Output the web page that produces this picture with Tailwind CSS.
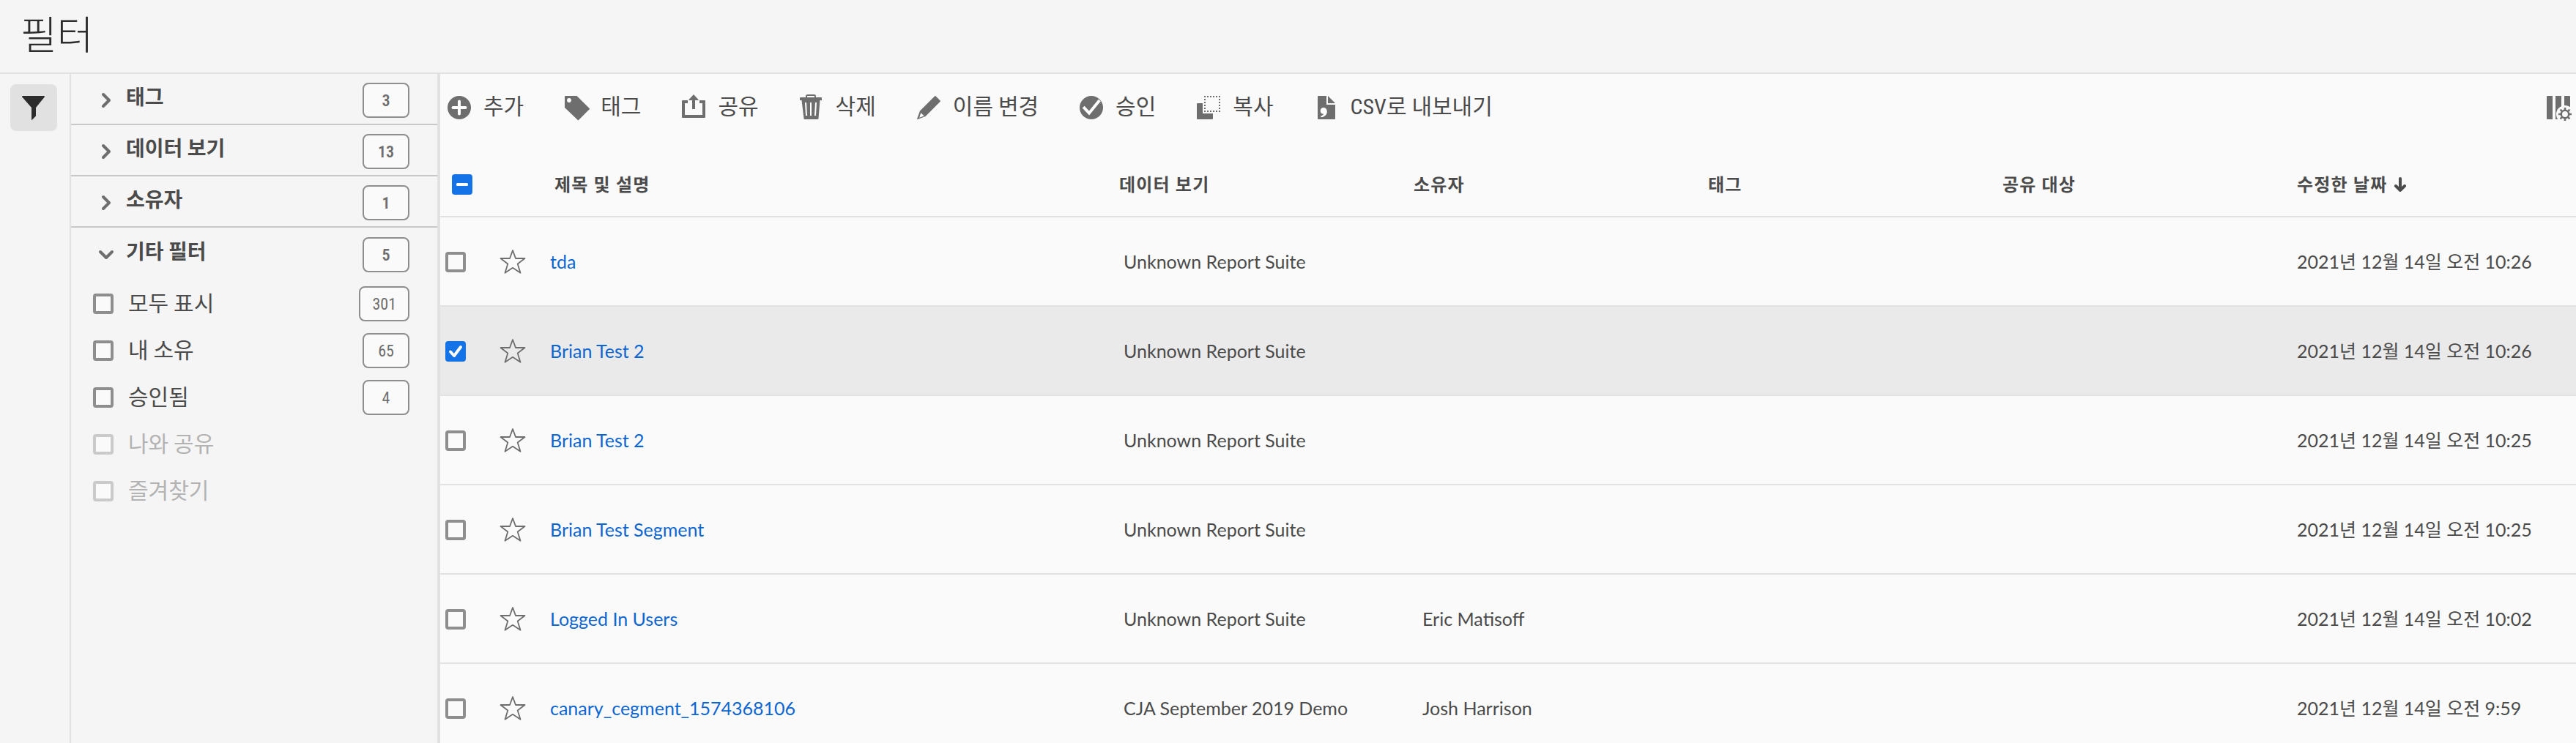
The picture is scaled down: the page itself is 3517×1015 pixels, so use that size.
<!DOCTYPE html>
<html lang="ko">
<head>
<meta charset="utf-8">
<meta name="viewport" content="width=device-width, initial-scale=1">
<title>필터</title>
<script src="https://cdn.jsdelivr.net/npm/@tailwindcss/browser@4"></script>
</head>
<body class="flex h-screen flex-col overflow-hidden bg-[#f5f5f5] font-['Roboto_Condensed','Noto_Sans_CJK_KR',sans-serif] text-[28px] text-[#4b4b4b]">

<header class="flex h-[101px] shrink-0 items-center border-b-2 border-[#e1e1e1] px-7">
  <h1 class="text-[54px] leading-none font-light text-[#2c2c2c]">필터</h1>
</header>

<div class="flex min-h-0 flex-1">
  <nav class="w-[97px] shrink-0 border-r-2 border-[#e1e1e1] pt-3.5 pl-3.5" aria-label="도구">
    <button type="button" aria-label="필터" class="flex size-16 items-center justify-center rounded-lg bg-[#e1e1e1]">
      <svg class="size-9" viewBox="0 0 36 36" fill="#2c2c2c"><path d="M3 2h29a1 1 0 0 1 .8 1.600L21 18v11.500L15.800 34.800a.5.5 0 0 1-.8-.4V18L2.200 3.600A1 1 0 0 1 3 2z"/></svg>
    </button>
  </nav>

  <aside id="filters" class="w-[504px] shrink-0 border-r-4 border-[#e1e1e1]" aria-label="필터 목록"></aside>

  <main class="min-w-0 flex-1 overflow-hidden bg-[#fafafa]">
    <div role="toolbar" class="mb-4 flex h-[92px] items-center gap-[54px] pr-1.5 pl-2 text-[30px] whitespace-nowrap text-[#4b4b4b]">
      <button type="button" class="flex items-center gap-[15px]">
        <svg class="size-9" viewBox="0 0 36 36"><circle cx="18" cy="18" r="16" fill="#6e6e6e"/><path d="M18 9.500v17M9.500 18h17" stroke="#fff" stroke-width="4" stroke-linecap="round"/></svg><span class="pb-1">추가</span>
      </button>
      <button type="button" class="flex items-center gap-[15px]">
        <svg class="size-9" viewBox="0 0 36 36"><path d="M3 2h15.500L35.700 19a1 1 0 0 1 0 1.200L21 35a1 1 0 0 1-1.200 0L2 18V3a1 1 0 0 1 1-1z" fill="#6e6e6e"/><circle cx="8" cy="8" r="2.900" fill="#fff"/></svg><span class="pb-1">태그</span>
      </button>
      <button type="button" class="flex items-center gap-[15px]">
        <svg class="size-9" viewBox="0 0 36 36" fill="#6e6e6e"><path d="M3 8h7v4H6v16h24V12h-4V8h7a1 1 0 0 1 1 1v22a1 1 0 0 1-1 1H3a1 1 0 0 1-1-1V9a1 1 0 0 1 1-1z"/><path d="M18 0l6.600 7.200a.5.5 0 0 1-.4.8H20v12h-4V8h-4.200a.5.5 0 0 1-.4-.8z"/></svg><span class="pb-1">공유</span>
      </button>
      <button type="button" class="flex items-center gap-[15px]">
        <svg class="size-9" viewBox="0 0 36 36"><path d="M11 5V2.500a1.500 1.500 0 0 1 1.500-1.500h9a1.500 1.500 0 0 1 1.500 1.500V5" fill="none" stroke="#6e6e6e" stroke-width="2"/><path d="M2 5a1 1 0 0 1 1-1h28a1 1 0 0 1 1 1v3h-2.500l-2 25a1 1 0 0 1-1 1h-18a1 1 0 0 1-1-1L4.500 8H2z" fill="#6e6e6e"/><path d="M10 11l1 18M17 11v18M24 11l-1 18" stroke="#fff" stroke-width="2"/></svg><span class="pb-1">삭제</span>
      </button>
      <button type="button" class="flex items-center gap-[15px]">
        <svg class="size-9" viewBox="0 0 36 36"><path d="M27.500 2.300l6.200 6.200a1 1 0 0 1 0 1.200L13.500 30 2.800 33.900a.6.6 0 0 1-.7-.7L6 22.500 26.300 2.300a.9.9 0 0 1 1.200 0z" fill="#6e6e6e"/><path d="M7.300 25.200l4.400 4.100-6.500 2.400z" fill="#fff"/></svg><span class="pb-1">이름 변경</span>
      </button>
      <button type="button" class="flex items-center gap-[15px]">
        <svg class="size-9" viewBox="0 0 36 36"><circle cx="18" cy="18" r="16" fill="#6e6e6e"/><path d="M8.500 18.500l6.500 7L28 9.500" fill="none" stroke="#fff" stroke-width="4" stroke-linecap="square"/></svg><span class="pb-1">승인</span>
      </button>
      <button type="button" class="flex items-center gap-[15px]">
        <svg class="size-9" viewBox="0 0 36 36"><path d="M3 12h7v14h14v7a1 1 0 0 1-1 1H3a1 1 0 0 1-1-1V13a1 1 0 0 1 1-1z" fill="#6e6e6e"/><path d="M12 3h22M12 23h22M13 2v22M33 2v22" stroke="#6e6e6e" stroke-width="2" stroke-dasharray="2 2"/></svg><span class="pb-1">복사</span>
      </button>
      <button type="button" class="flex items-center gap-[15px]">
        <svg class="size-9" viewBox="0 0 36 36"><path d="M7 2h11v12h12v19a1 1 0 0 1-1 1H7a1 1 0 0 1-1-1V3a1 1 0 0 1 1-1z" fill="#6e6e6e"/><path d="M20 2l10 10H20z" fill="#6e6e6e"/><path d="M14 18c3 0 4.800 2.300 4.800 5.400 0 4-3 7.200-8.300 7.800l-.4-1.700c2.300-.5 3.800-1.600 4.100-2.900-2.600.4-4.500-1.500-4.500-4.300 0-2.500 1.700-4.300 4.300-4.300z" fill="#fff"/></svg><span class="pb-1">CSV로 내보내기</span>
      </button>
      <button type="button" aria-label="열 설정" class="ml-auto">
        <svg class="size-9" viewBox="0 0 36 36"><path d="M2 3a1 1 0 0 1 1-1h7v32H3a1 1 0 0 1-1-1zM14 2h8v32h-8zM26 2h7a1 1 0 0 1 1 1v14h-8z" fill="#6e6e6e"/><circle cx="27" cy="27" r="12" fill="#fafafa"/><circle cx="27" cy="27" r="5.200" fill="none" stroke="#6e6e6e" stroke-width="2.500"/><path d="M27 18v3M27 33v3M18 27h3M33 27h3M20.600 20.600l2.200 2.200M31.200 31.200l2.200 2.200M33.400 20.600l-2.200 2.200M22.800 31.200l-2.200 2.200" stroke="#6e6e6e" stroke-width="2.600"/></svg>
      </button>
    </div>

    <table class="w-full table-fixed border-separate border-spacing-0 text-left font-['Lato','Noto_Sans_CJK_KR',sans-serif] text-[25px] whitespace-nowrap">
      <colgroup>
        <col class="w-[150px]"><col><col class="w-[402px]"><col class="w-[402px]"><col class="w-[402px]"><col class="w-[402px]"><col class="w-[381px]">
      </colgroup>
      <thead>
        <tr class="h-[88px] text-2xl tracking-wider *:border-b-2 *:border-[#e1e1e1] *:p-0 *:font-bold">
          <th>
            <span class="ml-4 grid size-7">
              <input type="checkbox" aria-label="모두 선택" class="col-start-1 row-start-1 size-7 appearance-none rounded bg-[#1473e6]">
              <svg class="pointer-events-none col-start-1 row-start-1 size-7" viewBox="0 0 28 28"><rect x="6" y="12" width="16" height="4" rx="1.500" fill="#fff"/></svg>
            </span>
          </th>
          <th><span class="pl-1.5">제목 및 설명</span></th>
          <th>데이터 보기</th>
          <th>소유자</th>
          <th>태그</th>
          <th>공유 대상</th>
          <th aria-sort="descending">
            <span class="flex items-center gap-2">수정한 날짜
              <svg class="size-5" viewBox="0 0 20 20" fill="none" stroke="#4b4b4b" stroke-width="4" stroke-linecap="round" stroke-linejoin="round"><path d="M10 2v15M4 12l6 6 6-6"/></svg>
            </span>
          </th>
        </tr>
      </thead>
      <tbody id="rows"></tbody>
    </table>
  </main>
</div>

<script>
const sections = [['태그', 3], ['데이터 보기', 13], ['소유자', 1], ['기타 필터', 5, true]];
const options = [['모두 표시', 301], ['내 소유', 65], ['승인됨', 4], ['나와 공유', null], ['즐겨찾기', null]];
const badge = (n, weight) => `<span class="ml-auto flex h-12 min-w-16 items-center justify-center rounded-lg border-2 border-[#8e8e8e] bg-[#fafafa] px-4 text-[22px] text-[#6e6e6e] ${weight}">${n}</span>`;

document.getElementById('filters').innerHTML =
  sections.map(([name, n, open]) => `
    <button type="button" aria-expanded="${!!open}" class="flex h-[70px] w-full items-center gap-[15px] pt-1 pr-[38px] pl-9 text-left font-bold ${open ? 'mb-0.5' : 'border-b-2 border-[#c8c8c8]'}">
      <svg class="size-6" viewBox="0 0 24 24" fill="none" stroke="#6e6e6e" stroke-width="4" stroke-linecap="round" stroke-linejoin="round"><path d="${open ? 'M4 8l8 8 8-8' : 'M8 4l8 8-8 8'}"/></svg>
      <span class="pb-1.5">${name}</span>${badge(n, 'font-semibold')}
    </button>`).join('') +
  options.map(([name, n]) => `
    <label class="flex h-16 items-center gap-5 pr-[38px] pl-[30px] text-[30px] ${n === null ? 'text-[#b3b3b3]' : ''}">
      <input type="checkbox" ${n === null ? 'disabled' : ''} class="size-7 appearance-none rounded border-4 bg-[#fafafa] ${n === null ? 'border-[#cacaca]' : 'border-[#8e8e8e]'}">
      <span class="pb-0.5">${name}</span>${n === null ? '' : badge(n, 'font-normal')}
    </label>`).join('');

const rows = [
  ['tda', 'Unknown Report Suite', '', '10:26'],
  ['Brian Test 2', 'Unknown Report Suite', '', '10:26', true],
  ['Brian Test 2', 'Unknown Report Suite', '', '10:25'],
  ['Brian Test Segment', 'Unknown Report Suite', '', '10:25'],
  ['Logged In Users', 'Unknown Report Suite', 'Eric Matisoff', '10:02'],
  ['canary_cegment_1574368106', 'CJA September 2019 Demo', 'Josh Harrison', '9:59'],
];
document.getElementById('rows').innerHTML = rows.map(([title, view, owner, time, on]) => `
  <tr class="h-[122px] *:border-b-2 *:border-[#e1e1e1] *:px-0 *:pt-0.5 *:pb-0 ${on ? 'bg-[#eaeaea]' : ''}">
    <td>
      <div class="flex items-center gap-[46px] pl-[7px]">
        <span class="grid size-7">
          <input type="checkbox" aria-label="${title} 선택" ${on ? 'checked' : ''} class="peer col-start-1 row-start-1 size-7 appearance-none rounded border-4 border-[#8e8e8e] bg-[#fafafa] checked:border-[#1473e6] checked:bg-[#1473e6]">
          <svg class="pointer-events-none invisible col-start-1 row-start-1 size-7 peer-checked:visible" viewBox="0 0 28 28" fill="none" stroke="#fff" stroke-width="4" stroke-linecap="round" stroke-linejoin="round"><path d="M7 14.500l5 5.500 9-12"/></svg>
        </span>
        <button type="button" aria-label="즐겨찾기">
          <svg class="size-9" viewBox="0 0 36 36" fill="none" stroke="#6e6e6e" stroke-width="1.800" stroke-linejoin="round"><path d="M18 2l4 11h12.500l-9.800 7.500 3.800 12.300L18 25.800 7.500 32.800l3.800-12.300L1.500 13H14z"/></svg>
        </button>
      </div>
    </td>
    <td><a href="#" class="text-[#0d66d0]">${title}</a></td>
    <td><span class="pl-1.5">${view}</span></td>
    <td><span class="pl-3">${owner}</span></td>
    <td></td>
    <td></td>
    <td>2021년 12월 14일 오전 ${time}</td>
  </tr>`).join('');
</script>
</body>
</html>
